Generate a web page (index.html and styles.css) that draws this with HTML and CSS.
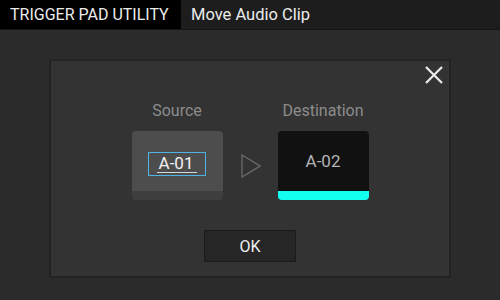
FILE: index.html
```html
<!DOCTYPE html>
<html lang="en">
<head>
  <meta charset="UTF-8">
  <title>Trigger Pad Utility</title>
  <link rel="stylesheet" href="styles.css">
</head>
<body>

  <!-- Title Bar -->
  <header class="topbar">
    <div class="app-name">TRIGGER PAD UTILITY</div>
    <div class="page-name">Move Audio Clip</div>
  </header>

  <!-- Move Dialog -->
  <main class="stage">
    <div class="dialog">
      <button class="close-btn" aria-label="Close">
        <svg width="18" height="18" viewBox="0 0 18 18">
          <path d="M1 1 L17 17 M17 1 L1 17" stroke="#ececec" stroke-width="2.2" fill="none"/>
        </svg>
      </button>

      <div class="pads">
        <div class="pad-col">
          <div class="pad-label">Source</div>
          <div class="pad source">
            <div class="pad-face">
              <span class="pad-field"><span class="pad-value">A-01</span></span>
            </div>
            <div class="pad-bar"></div>
          </div>
        </div>

        <svg class="arrow" width="20" height="24" viewBox="0 0 20 24">
          <path d="M1 1 L19 12 L1 23 Z" stroke="#6b6b6b" stroke-width="1.3" fill="none"/>
        </svg>

        <div class="pad-col">
          <div class="pad-label">Destination</div>
          <div class="pad dest">
            <div class="pad-face">A-02</div>
            <div class="pad-bar"></div>
          </div>
        </div>
      </div>

      <button class="ok-btn">OK</button>
    </div>
  </main>

</body>
</html>
```

FILE: styles.css
```css
body {
  margin: 0;
  background: #2b2b2b;
  font-family: Roboto, "Liberation Sans", sans-serif;
  width: 500px;
  height: 300px;
  overflow: hidden;
}

.topbar {
  display: flex;
  height: 30px;
  background: #1d1d1d;
  border-bottom: 1px solid #141414;
  box-sizing: border-box;
  color: #ececec;
  font-size: 16px;
  line-height: 30px;
}

.app-name {
  width: 181px;
  padding-left: 10px;
  box-sizing: border-box;
  background: #000;
  height: 29px;
}

.page-name {
  padding-left: 10px;
  font-size: 16.5px;
}

.stage {
  padding: 29px 0 0 49px;
}

.dialog {
  position: relative;
  width: 402px;
  height: 219px;
  box-sizing: border-box;
  background: #333;
  border: 2px solid #232323;
  display: flex;
  flex-direction: column;
  align-items: center;
  padding-top: 40px;
}

.close-btn {
  position: absolute;
  top: 5px;
  right: 6px;
  padding: 0;
  border: none;
  background: none;
  width: 18px;
  height: 18px;
  cursor: pointer;
}

.close-btn svg {
  display: block;
}

.pads {
  display: flex;
  align-items: flex-start;
}

.pad-col {
  width: 91px;
  display: flex;
  flex-direction: column;
  align-items: center;
}

.pad-label {
  color: #8c8c8c;
  font-size: 16px;
  line-height: 20px;
  margin-bottom: 10px;
}

.pad {
  width: 91px;
  height: 69px;
  border-radius: 4px;
  overflow: hidden;
  display: flex;
  flex-direction: column;
}

.pad-face {
  flex: 1;
  display: flex;
  align-items: center;
  justify-content: center;
  font-size: 17px;
}

.pad-bar {
  height: 9px;
}

.source .pad-face {
  background: #4d4d4d;
  padding-top: 5px;
}

.source .pad-bar {
  background: #3e3e3e;
}

.dest .pad-face {
  background: #111;
  color: #b4b4b4;
  border-bottom: 1px solid #0a0a0a;
}

.dest .pad-bar {
  background: #13fff0;
}

.pad-field {
  width: 58px;
  height: 24px;
  box-sizing: border-box;
  border: 1.5px solid #4eb4e2;
  display: flex;
  align-items: center;
  justify-content: center;
  color: #f2f2f2;
}

.pad-value {
  border-bottom: 1px solid #d8d8d8;
  padding: 0 4px 0 2px;
  line-height: 18px;
}

.arrow {
  margin: 53px 17px 0 18px;
}

.ok-btn {
  margin-top: 30px;
  width: 92px;
  height: 32px;
  background: #262626;
  border: 1px solid #1a1a1a;
  color: #f0f0f0;
  font-family: inherit;
  font-size: 16px;
  cursor: pointer;
}
```
